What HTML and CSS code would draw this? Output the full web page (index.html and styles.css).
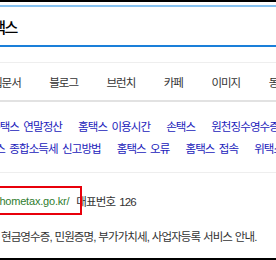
FILE: index.html
```html
<!DOCTYPE html>
<html lang="ko">
<head>
<meta charset="utf-8">
<title>홈택스 - 검색</title>
<link rel="stylesheet" href="styles.css">
</head>
<body>
<div class="page">
  <div class="header">
    <div class="title">홈택스</div>
  </div>
  <nav class="tabs">
    <span class="tab first">웹문서</span>
    <span class="tab">블로그</span>
    <span class="tab">브런치</span>
    <span class="tab">카페</span>
    <span class="tab">이미지</span>
    <span class="tab">동영상</span>
  </nav>
  <div class="related">
    <div class="rel-row row1">
      <a class="rel first">홈택스 연말정산</a>
      <a class="rel">홈택스 이용시간</a>
      <a class="rel">손택스</a>
      <a class="rel">원천징수영수증</a>
    </div>
    <div class="rel-row row2">
      <a class="rel first">홈택스 종합소득세 신고방법</a>
      <a class="rel">홈택스 오류</a>
      <a class="rel">홈택스 접속</a>
      <a class="rel">위택스</a>
    </div>
  </div>
  <div class="result">
    <div class="url-row">
      <span class="url">https://www.hometax.go.kr/</span>
      <span class="phone">대표번호 126</span>
      <span class="mark"></span>
    </div>
    <p class="desc">현금영수증, 민원증명, 부가가치세, 사업자등록 서비스 안내.</p>
  </div>
</div>
</body>
</html>
```

FILE: styles.css
```css
html, body {
  margin: 0;
  padding: 0;
}

body {
  width: 276px;
  height: 260px;
  overflow: hidden;
  background: #fff;
  font-family: "Liberation Sans", "Noto Sans CJK KR", sans-serif;
}

.page {
  box-sizing: border-box;
  height: 260px;
  border-top: 2px solid #000;
  border-bottom: 2px solid #000;
  display: flex;
  flex-direction: column;
  white-space: nowrap;
}

.header {
  margin-top: 3px;
  height: 38px;
  border-top: 2px solid #86c2f1;
  border-bottom: 2px solid #1a7fd9;
  display: flex;
  align-items: center;
}

.title {
  margin-left: -20px;
  font-family: "Noto Sans CJK KR", sans-serif;
  font-size: 15px;
  font-weight: 500;
  letter-spacing: -1.5px;
  color: #000;
}

.tabs {
  margin-top: 15px;
  height: 37px;
  border-top: 1px solid #eee;
  border-bottom: 2px solid #e2e2e2;
  display: flex;
  align-items: center;
  gap: 28.5px;
}

.tab {
  font-size: 11.5px;
  letter-spacing: -1px;
  color: #333;
}

.tab.first {
  margin-left: -8px;
}

.related {
  box-sizing: border-box;
  height: 71px;
  padding-top: 18px;
  border-bottom: 1px solid #eee;
  display: flex;
  flex-direction: column;
  gap: 11px;
}

.rel-row {
  display: flex;
  align-items: center;
  gap: 16px;
  height: 11px;
}

.rel {
  font-size: 11.5px;
  letter-spacing: -0.9px;
  word-spacing: 2px;
  color: #2222bb;
}

.row1 .first {
  margin-left: -10px;
}

.row2 .first {
  margin-left: -24px;
}

.result {
  flex: 1;
  display: flex;
  flex-direction: column;
  padding-top: 22px;
}

.url-row {
  position: relative;
  display: flex;
  align-items: center;
  gap: 7px;
  height: 12px;
  margin-left: -57.5px;
}

.url {
  font-size: 11px;
  letter-spacing: -0.2px;
  color: #2f7d2f;
}

.phone {
  font-size: 11.5px;
  letter-spacing: -0.9px;
  word-spacing: 2px;
  color: #333;
}

.mark {
  position: absolute;
  left: 0;
  top: -9px;
  width: 135.5px;
  height: 25px;
  border: 2px solid #e8000b;
}

.desc {
  margin: 24px 0 0 1px;
  line-height: 12px;
  font-size: 11.5px;
  letter-spacing: -0.9px;
  word-spacing: 0.5px;
  color: #333;
}
```
